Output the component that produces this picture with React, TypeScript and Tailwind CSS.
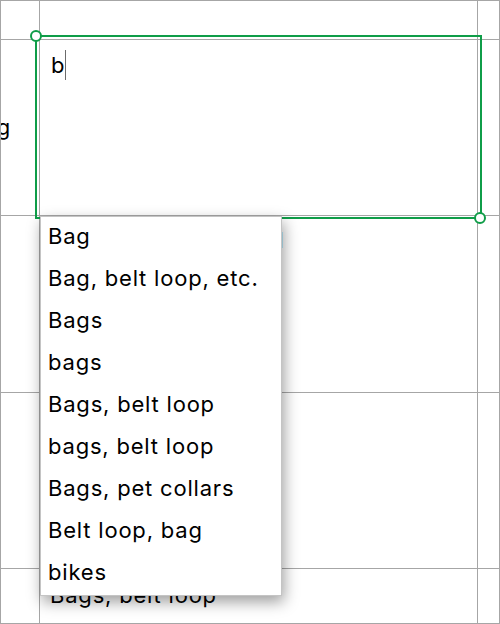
import React from "react";

const suggestions = [
  "Bag",
  "Bag, belt loop, etc.",
  "Bags",
  "bags",
  "Bags, belt loop",
  "bags, belt loop",
  "Bags, pet collars",
  "Belt loop, bag",
  "bikes",
];

function Handle({ className }: { className: string }) {
  return (
    <div
      className={`absolute h-[12px] w-[12px] rounded-full border-2 border-[#0f9d48] bg-white ${className}`}
    />
  );
}

export default function App() {
  return (
    <div
      className="relative h-[624px] w-[500px] overflow-hidden bg-white text-black tracking-[0.8px]"
      style={{ fontFamily: "Inter, 'Liberation Sans', sans-serif" }}
    >
      {/* sheet grid */}
      <div className="grid h-full w-full grid-cols-[38px_437px_21px] grid-rows-[38px_175px_176px_175px_54px] gap-px bg-[#a6a6a6] p-px">
        <div className="bg-white" />
        <div className="bg-white" />
        <div className="bg-white" />

        <div className="flex items-center justify-end overflow-hidden whitespace-nowrap bg-white pr-[28px] text-[22px]">
          Bag
        </div>
        <div className="bg-white" />
        <div className="bg-white" />

        <div className="bg-white" />
        <div className="overflow-hidden whitespace-nowrap bg-white pl-[10px] pt-[10px] text-[22px] leading-[28px]">
          Bags, pet collars, bel
        </div>
        <div className="bg-white" />

        <div className="bg-white" />
        <div className="bg-white" />
        <div className="bg-white" />

        <div className="bg-white" />
        <div className="flex items-center overflow-hidden whitespace-nowrap bg-white pl-[10px] pb-[2px] text-[22px]">
          Bags, belt loop
        </div>
        <div className="bg-white" />
      </div>

      {/* cell editor */}
      <div className="absolute left-[35px] top-[35px] h-[184px] w-[447px] border-2 border-[#0f9d48]">
        <div className="flex items-center pl-[14px] pt-[13px] text-[22px] leading-[30px] tracking-normal">
          <span>b</span>
          <span className="ml-[1px] h-[30px] w-px bg-[#6b6b6b]" />
        </div>
      </div>
      <Handle className="left-[30px] top-[30px]" />
      <Handle className="left-[474px] top-[212px]" />

      {/* autocomplete list */}
      <div className="absolute left-[40px] top-[216px] w-[242px] border border-[#c4c4c4] bg-white shadow-[2px_6px_14px_rgba(0,0,0,0.38)]">
        {suggestions.map((s) => (
          <div
            key={s}
            className="flex h-[42px] items-center whitespace-nowrap px-[7px] pb-[4px] text-[22px]"
          >
            {s}
          </div>
        ))}
      </div>
    </div>
  );
}
